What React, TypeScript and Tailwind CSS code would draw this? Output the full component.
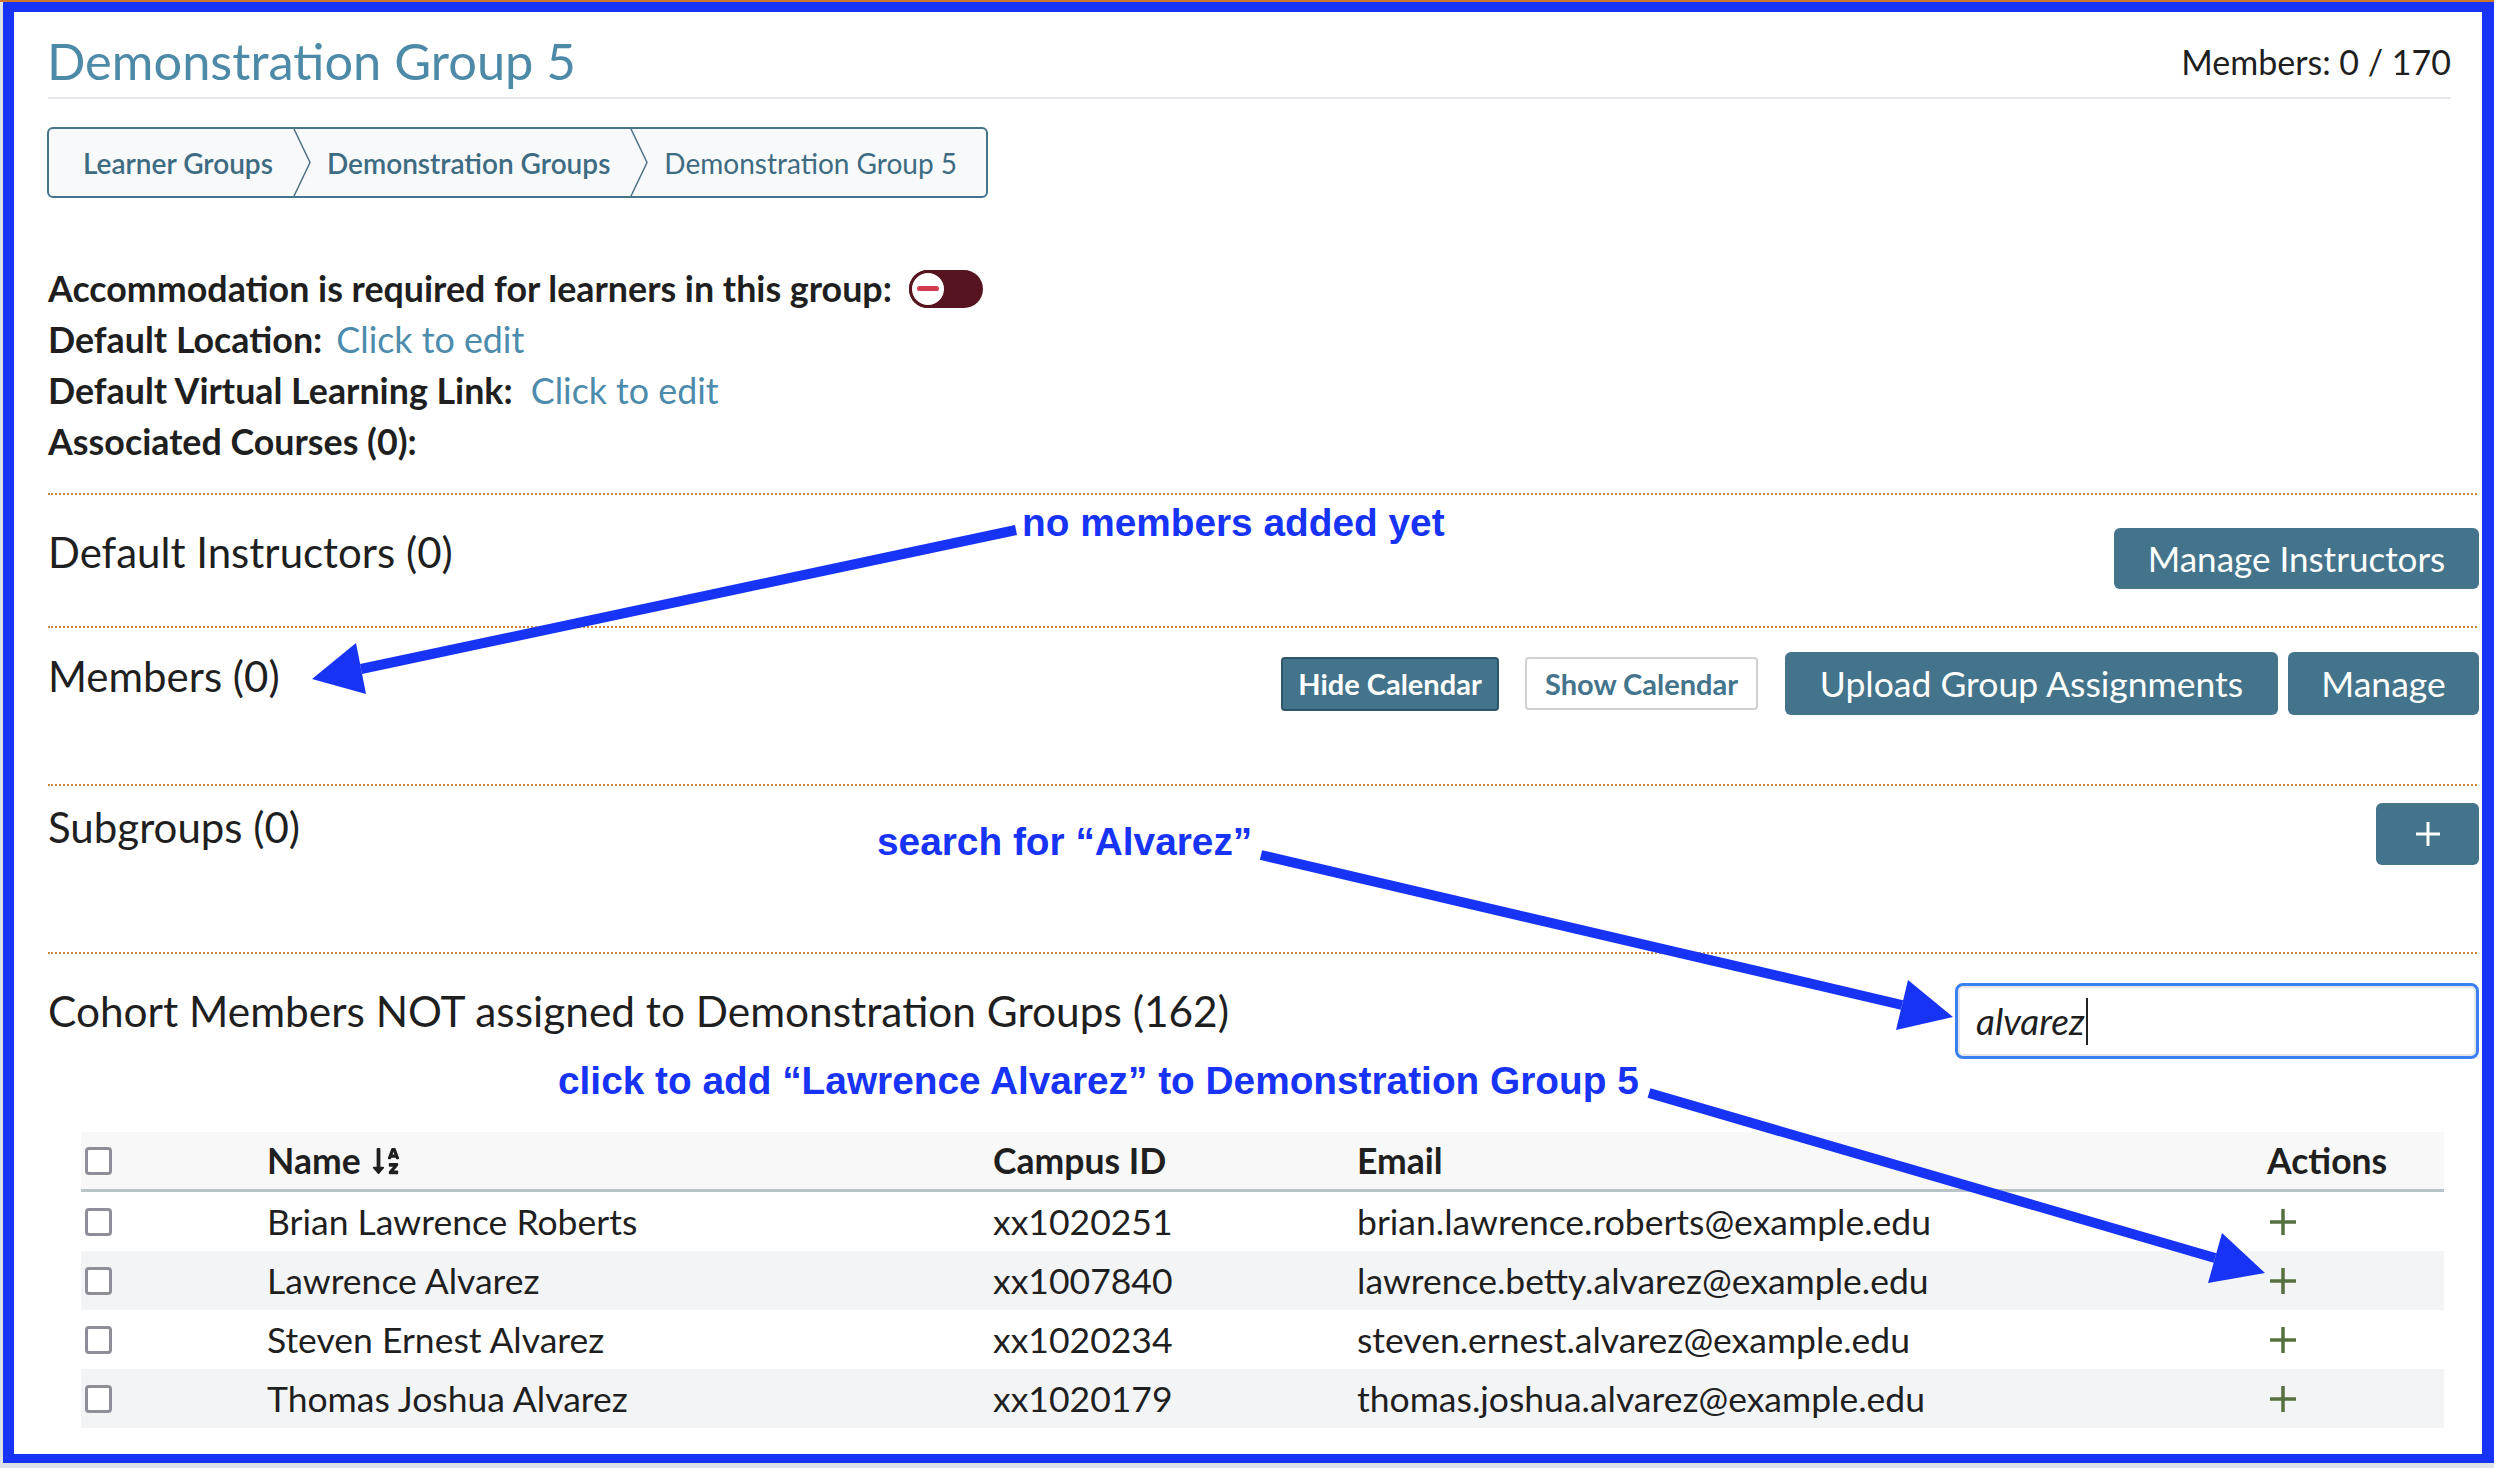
import React from 'react';
import { FaSortAlphaDown } from 'react-icons/fa';

const rows = [
  { name: 'Brian Lawrence Roberts', id: 'xx1020251', email: 'brian.lawrence.roberts@example.edu' },
  { name: 'Lawrence Alvarez', id: 'xx1007840', email: 'lawrence.betty.alvarez@example.edu' },
  { name: 'Steven Ernest Alvarez', id: 'xx1020234', email: 'steven.ernest.alvarez@example.edu' },
  { name: 'Thomas Joshua Alvarez', id: 'xx1020179', email: 'thomas.joshua.alvarez@example.edu' },
];

const Chevron = () => (
  <svg width="18" height="67" viewBox="0 0 18 67" className="shrink-0">
    <polyline points="1,0 17,33.5 1,67" fill="none" stroke="#4d7386" strokeWidth="1.5" />
  </svg>
);

const Checkbox = () => (
  <div className="w-[27px] h-[28px] border-[3px] border-[#8e8e98] rounded-[4px] bg-white" />
);

const PlusIcon = () => (
  <svg width="30" height="30" viewBox="0 0 30 30">
    <line x1="15" y1="2" x2="15" y2="28" stroke="#56713f" strokeWidth="3.5" />
    <line x1="2" y1="15" x2="28" y2="15" stroke="#56713f" strokeWidth="3.5" />
  </svg>
);

const Toggle = () => (
  <div className="ml-[17px] w-[74px] h-[38px] rounded-full bg-[#55141f] flex items-center">
    <div className="w-[38px] h-[38px] rounded-full bg-white border-[3px] border-[#55141f] flex items-center justify-center">
      <div className="w-[22px] h-[5px] rounded-full bg-[#d13a50]" />
    </div>
  </div>
);

// blue callouts drawn over the page
const Arrow = ({ x1, y1, x2, y2, head }: { x1: number; y1: number; x2: number; y2: number; head: string }) => (
  <>
    <line x1={x1} y1={y1} x2={x2} y2={y2} stroke="#1733f6" strokeWidth="10" />
    <polygon points={head} fill="#1733f6" />
  </>
);

export default function App() {
  return (
    <div className="relative w-[2494px] h-[1468px] overflow-hidden bg-[#dde1e8] font-['Lato',sans-serif] text-[#1f1f1f]">
      <div className="h-[2px] bg-[#d0792b]" />
      <div className="ml-[3px] w-[2491px] h-[1461px] border-solid border-[#1733f6] border-l-[11px] border-t-[10px] border-r-[12px] border-b-[9px] bg-white">
        <div className="pl-[34px] pr-[3px] h-full">
          {/* header */}
          <div className="mr-[28px] pt-[19px] pb-[6px] border-b-2 border-[#e5e8ec] flex justify-between items-start">
            <h1 className="text-[50.6px] leading-[60px] text-[#4d8aa8] -ml-[1px]">Demonstration Group 5</h1>
            <div className="mt-[10px] text-[34px] leading-[42px]">Members: 0 / 170</div>
          </div>

          {/* breadcrumb */}
          <div className="mt-[28px] -ml-[1px] w-[941px] h-[71px] border-2 border-[#45748a] rounded-md bg-[#f8f9fa] flex items-stretch text-[28px] text-[#3d6b82]">
            <div className="pl-[34px] pr-[20px] flex items-center font-semibold">Learner Groups</div>
            <Chevron />
            <div className="pl-[16px] pr-[20px] flex items-center font-semibold">Demonstration Groups</div>
            <Chevron />
            <div className="pl-[16px] flex items-center">Demonstration Group 5</div>
          </div>

          {/* details */}
          <div className="mt-[65px] text-[35.8px] leading-[51px]">
            <div className="flex items-center font-bold">
              Accommodation is required for learners in this group:
              <Toggle />
            </div>
            <div>
              <span className="font-bold">Default Location:</span>
              <span className="ml-[14px] text-[#4c8bab]">Click to edit</span>
            </div>
            <div>
              <span className="font-bold">Default Virtual Learning Link:</span>
              <span className="ml-[18px] text-[#4c8bab]">Click to edit</span>
            </div>
            <div className="font-bold">Associated Courses (0):</div>
          </div>

          <div className="mt-[26px] mr-[2px] border-t-2 border-dotted border-[#c8873e]" />

          {/* instructors */}
          <div className="h-[131px] flex justify-between items-start">
            <h2 className="mt-[34px] text-[42px] leading-[46px]">Default Instructors (0)</h2>
            <button className="mt-[33px] w-[365px] h-[61px] rounded-md bg-[#43748b] text-white text-[35px]">Manage Instructors</button>
          </div>

          <div className="mr-[2px] border-t-2 border-dotted border-[#c8873e]" />

          {/* members */}
          <div className="h-[156px] flex justify-between items-start">
            <h2 className="mt-[25px] text-[42px] leading-[46px]">Members (0)</h2>
            <div className="mt-[24px] flex items-center">
              <button className="w-[218px] h-[54px] rounded-[4px] bg-[#43748b] border-2 border-[#2d5669] text-white font-bold text-[29px]">Hide Calendar</button>
              <button className="ml-[26px] w-[233px] h-[53px] rounded-[4px] bg-white border-2 border-[#d0d0d0] text-[#43748b] font-bold text-[29px]">Show Calendar</button>
              <button className="ml-[27px] w-[493px] h-[63px] rounded-md bg-[#43748b] text-white text-[35.5px]">Upload Group Assignments</button>
              <button className="ml-[10px] w-[191px] h-[63px] rounded-md bg-[#43748b] text-white text-[35.5px]">Manage</button>
            </div>
          </div>

          <div className="mr-[2px] border-t-2 border-dotted border-[#c8873e]" />

          {/* subgroups */}
          <div className="h-[166px] flex justify-between items-start">
            <h2 className="mt-[18px] text-[42px] leading-[46px]">Subgroups (0)</h2>
            <button className="mt-[17px] w-[103px] h-[62px] rounded-md bg-[#43748b] flex items-center justify-center">
              <svg width="26" height="26" viewBox="0 0 26 26">
                <line x1="13" y1="1" x2="13" y2="25" stroke="white" strokeWidth="3" />
                <line x1="1" y1="13" x2="25" y2="13" stroke="white" strokeWidth="3" />
              </svg>
            </button>
          </div>

          <div className="mr-[2px] border-t-2 border-dotted border-[#c8873e]" />

          {/* cohort */}
          <div className="flex justify-between items-start">
            <h2 className="mt-[34px] text-[42.4px] leading-[46px]">Cohort Members NOT assigned to Demonstration Groups (162)</h2>
            <div className="mt-[29px] w-[524px] h-[76px] rounded-lg border-[3px] border-[#3a80f2] shadow-[inset_0_0_0_2px_#e6e6e6] flex items-center pl-[18px]">
              <span className="text-[37px] italic">alvarez</span>
              <span className="ml-[1px] w-[2px] h-[47px] bg-[#222]" />
            </div>
          </div>

          {/* table */}
          <div className="mt-[73px] ml-[33px] w-[2363px] text-[35.5px]">
            <div className="h-[60px] bg-[#f8f8f8] border-b-[3px] border-[#b9c3c7] grid grid-cols-[186px_726px_364px_910px_177px] items-center font-bold">
              <div className="pl-[4px]"><Checkbox /></div>
              <div className="flex items-center gap-[10px]">Name <FaSortAlphaDown className="w-[30px] h-[30px]" /></div>
              <div>Campus ID</div>
              <div>Email</div>
              <div>Actions</div>
            </div>
            {rows.map((r, i) => (
              <div
                key={r.id}
                className={`h-[59px] grid grid-cols-[186px_726px_364px_910px_177px] items-center ${i % 2 === 1 ? 'bg-[#f3f4f6]' : 'bg-white'}`}
              >
                <div className="pl-[4px]"><Checkbox /></div>
                <div>{r.name}</div>
                <div>{r.id}</div>
                <div>{r.email}</div>
                <div className="pl-[1px] flex"><PlusIcon /></div>
              </div>
            ))}
          </div>
        </div>
      </div>

      {/* annotations */}
      <svg className="absolute left-0 top-0 pointer-events-none" width="2494" height="1468">
        <Arrow x1={1016} y1={530} x2={361} y2={669} head="312,679 366,694 356,643" />
        <Arrow x1={1261} y1={855} x2={1902} y2={1005} head="1953,1017 1896,1030 1908,980" />
        <Arrow x1={1649} y1={1093} x2={2215} y2={1258} head="2265,1273 2208,1283 2222,1233" />
      </svg>
      <div className="absolute left-[1022px] top-[504px] text-[38.8px] leading-[38px] font-bold text-[#1733f6] font-['Liberation_Sans',Arial,sans-serif] whitespace-nowrap">no members added yet</div>
      <div className="absolute left-[877px] top-[823px] text-[38.8px] leading-[38px] font-bold text-[#1733f6] font-['Liberation_Sans',Arial,sans-serif] whitespace-nowrap">search for “Alvarez”</div>
      <div className="absolute left-[558px] top-[1062px] text-[38.8px] leading-[38px] font-bold text-[#1733f6] font-['Liberation_Sans',Arial,sans-serif] whitespace-nowrap">click to add “Lawrence Alvarez” to Demonstration Group 5</div>
    </div>
  );
}
